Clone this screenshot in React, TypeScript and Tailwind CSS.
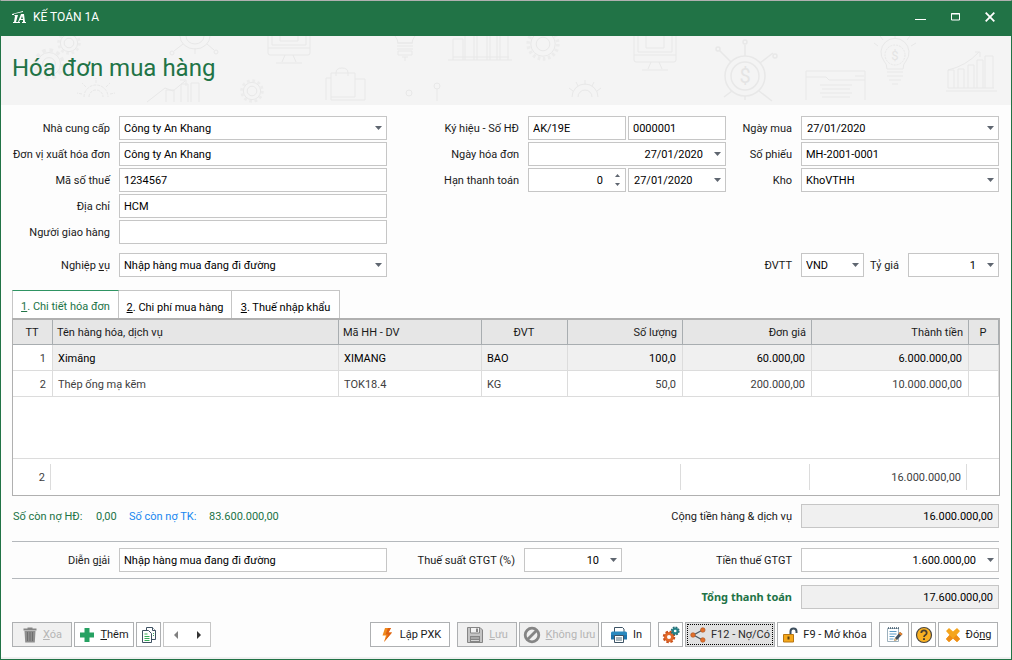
import type { ReactNode } from "react";
import clsx from "clsx";

const grid = "grid grid-cols-[98px_268fr_123px_198fr_57px_198fr] gap-x-[9px] gap-y-0.5";
const box = "h-6 w-full min-w-0 border border-[#c6c6c6] bg-white pl-1 text-black outline-none";

const Arrow = () => (
  <svg viewBox="0 0 7 4" className="h-1 w-[7px]" fill="#5f6670">
    <path d="M0 0h7L3.500 4z" />
  </svg>
);

const Label = ({ id, className, children }: { id: string; className?: string; children: ReactNode }) => (
  <label htmlFor={id} className={clsx("flex h-6 items-center justify-end pt-0.5 whitespace-nowrap", className)}>
    <span>{children}</span>
  </label>
);

type FieldProps = { id: string; value: string; right?: boolean; label?: string };

const TextField = ({ id, value, right, label }: FieldProps) => (
  <input id={id} aria-label={label} defaultValue={value} className={clsx(box, right ? "pr-[5px] text-right" : "pr-1")} />
);

const TotalField = ({ id, value }: FieldProps) => (
  <input id={id} readOnly value={value} className="h-6 w-full min-w-0 border border-[#c6c6c6] bg-[#f0f0f0] px-[5px] text-right text-black outline-none" />
);

// text box with a drop button (date picker, calculator)
const PickField = ({ id, value, right, label }: FieldProps) => (
  <div className="flex h-6 w-full min-w-0 border border-[#c6c6c6] bg-white">
    <input id={id} aria-label={label} defaultValue={value} className={clsx("w-full min-w-0 pt-0.5 pr-[7px] pl-[5px] text-black outline-none", right && "text-right")} />
    <button type="button" aria-label="Chọn" className="flex w-[15px] shrink-0 items-center justify-center">
      <Arrow />
    </button>
  </div>
);

const SelectField = ({ id, value, right }: FieldProps) => (
  <div className="relative w-full min-w-0">
    <select id={id} defaultValue={value} className={clsx(box, "appearance-none pt-0.5 pr-[22px]", right && "text-right")}>
      <option>{value}</option>
    </select>
    <span className="pointer-events-none absolute inset-y-0 right-0 flex w-[17px] items-center justify-center">
      <Arrow />
    </span>
  </div>
);

const SpinField = ({ id, value }: FieldProps) => (
  <div className="flex h-6 w-full min-w-0 border border-[#c6c6c6] bg-white">
    <input id={id} defaultValue={value} className="w-full min-w-0 pt-0.5 pr-[7px] text-right text-black outline-none" />
    <span className="flex w-[15px] shrink-0 flex-col items-center justify-center gap-1.5">
      <button type="button" aria-label="Tăng">
        <svg viewBox="0 0 5 3" className="block h-[3px] w-[5px]" fill="#5f6670"><path d="M0 3h5L2.500 0z" /></svg>
      </button>
      <button type="button" aria-label="Giảm">
        <svg viewBox="0 0 5 3" className="block h-[3px] w-[5px]" fill="#5f6670"><path d="M0 0h5L2.500 3z" /></svg>
      </button>
    </span>
  </div>
);

const Gear = ({ x, y, r, teeth = 12 }: { x: number; y: number; r: number; teeth?: number }) => (
  <g>
    <circle cx={x} cy={y} r={r * 0.72} />
    <circle cx={x} cy={y} r={r * 0.4} />
    <circle cx={x} cy={y} r={r * 0.87} stroke="#ececec" strokeWidth={r * 0.22} strokeDasharray={`${(r * 0.87 * Math.PI) / teeth}`} />
  </g>
);

const Monitor = ({ x, y }: { x: number; y: number }) => (
  <g>
    <path d={`M${x} ${y}v24q0 2 2 2h38q2 0 2-2v-24M${x} ${y + 19}h42M${x + 4} ${y}v16h34v-16M${x + 12} ${y}v12h18v-12`} />
    <path d={`M${x + 17} ${y + 26}l-3 7M${x + 25} ${y + 26}l3 7M${x + 8} ${y + 34}h26`} />
  </g>
);

const BannerArt = () => (
  <svg viewBox="1 36 1010 69" preserveAspectRatio="xMidYMid slice" className="absolute inset-0 h-full w-full" fill="none" stroke="#e8e8e8" aria-hidden="true">
    <Gear x={69} y={43} r={12} />
    <Gear x={49} y={64} r={16} />
    <path d="M84 97a12 12 0 0 1 24 0M89 97a7 7 0 0 1 14 0M96 83v-5M86 87l-4-4M106 87l4-4M82 94l-5-1M110 94l5-1" strokeDasharray="3 1" />
    <path d="M147 102l18-14 8 3 12-10M180 80h6v6M166 102V90h8v12M181 102V84h7v18M191 102V83h8v19" />
    <path d="M180 36a15 13 0 0 0 30 0M186 36a9 8 0 0 0 18 0M183 44l-9 7M207 44l7 6M195 48v6" />
    <circle cx="172" cy="53" r="2" /><circle cx="216" cy="52" r="2" />
    <Gear x={252} y={91} r={12} />
    <Monitor x={268} y={29} />
    <path d="M326 100V78h5M331 97V73h24v24zM336 76v-3q0-5 6-5t6 5v3M355 79h10v21h-34v-3" />
    <path d="M395 36q3 4 3 7h14q0-3 3-7M397 43h16M397 46h16M397 49h16M398 51h14v4h-14zM402 57h6M405 57v4" />
    <path d="M448 60h64M453 60V39h10v21M465 60V36M474 60V36M477 60V36M487 60V36M490 60V36M497 60V36M500 60V36M508 60V36M453 57h56" />
    <Gear x={543} y={44} r={17} teeth={18} />
    <circle cx="409" cy="93" r="3" /><circle cx="437" cy="86" r="3" /><path d="M437 89v12" />
    <path d="M572 97a13 13 0 0 1 26 0M578 97a7 7 0 0 1 14 0M585 80v5M576 82l2 4M594 82l-2 4M569 88l4 3M601 88l-4 3" />
    <Monitor x={634} y={36} />
    <g strokeWidth="1.500">
      <circle cx="745" cy="76" r="20" /><circle cx="745" cy="76" r="14" />
      <path d="M745 56V45M731 62l-12-12M760 63l13-10M732 91l-8 6M759 91l13 10M745 96v4" />
      <circle cx="718" cy="49" r="2" /><circle cx="745" cy="42" r="2" /><circle cx="775" cy="56" r="2" />
    </g>
    <text x="745" y="83" textAnchor="middle" fontSize="20" fill="#e4e4e4" stroke="none">$</text>
    <path d="M806 100V71h59v29M806 77h20l3 3h36M855 76h9M820 85h32M822 89h28M820 93h32M822 97h28" />
    <path d="M887 69q0-5-3-8a14 14 0 1 1 22 0q-3 3-3 8zM887 72h16M887 76h16M889 80h12M892 84h6" />
    <circle cx="895" cy="55" r="10" strokeDasharray="2 1" />
    <path d="M895 38v-3M883 40l-3-4M907 40l3-4M878 46l-4-3M911 46l5-3" />
    <text x="895" y="60" textAnchor="middle" fontSize="13" fill="#e4e4e4" stroke="none">$</text>
    <path d="M946 91h51M948 88V70h6v18M958 88V69h6v19M968 88V65h6v23M977 88V60h6v28M985 88V56h8v32M948 70q18-4 31-18M975 52h5v5M948 88h46" />
  </svg>
);

const TitleBar = () => (
  <header className="flex h-[35px] items-center justify-between bg-[#217346] pr-4 pb-[3px] pl-[11px] text-white">
    <div className="flex items-center gap-[7px]">
      <svg viewBox="0 0 14 13" className="h-[13px] w-3.5" fill="#fff" aria-hidden="true">
        <path d="M0 3L11 0v1L2 3v1H0zM3 4h3L4 11h1v1H1v-1h1l1-6H2zM9 3h3l1 8h1v1h-4v-1h1V9H8l-1 2h1v1H5v-1h1zM9 8h2l-1-3z" />
      </svg>
      <span className="text-xs">KẾ TOÁN 1A</span>
    </div>
    <div className="flex items-center gap-[25px]">
      <button type="button" aria-label="Thu nhỏ">
        <svg viewBox="0 0 11 10" className="h-2.5 w-[11px]" fill="#fff"><path d="M0 7h11v1H0z" /></svg>
      </button>
      <button type="button" aria-label="Phóng to">
        <svg viewBox="0 0 9 8" className="h-2 w-[9px]" fill="none" stroke="#fff"><path d="M.5.5h8v6.500h-8zM0 1h9" /></svg>
      </button>
      <button type="button" aria-label="Đóng cửa sổ">
        <svg viewBox="0 0 10 10" className="h-2.5 w-2.5" fill="none" stroke="#fff" strokeWidth="1.800"><path d="M.7.7l8.600 8.600M9.300.7L.7 9.300" /></svg>
      </button>
    </div>
  </header>
);

const tabs = [
  { n: "1", text: "Chi tiết hóa đơn", width: "w-[107px]" },
  { n: "2", text: "Chi phí mua hàng", width: "w-[113px]" },
  { n: "3", text: "Thuế nhập khẩu", width: "w-[108px]" },
];

const rows = [
  ["1", "Ximăng", "XIMANG", "BAO", "100,0", "60.000,00", "6.000.000,00", ""],
  ["2", "Thép ống mạ kẽm", "TOK18.4", "KG", "50,0", "200.000,00", "10.000.000,00", ""],
];

const heads = [
  { text: "TT", align: "text-center" },
  { text: "Tên hàng hóa, dịch vụ", align: "text-left" },
  { text: "Mã HH - DV", align: "text-left" },
  { text: "ĐVT", align: "text-center" },
  { text: "Số lượng", align: "text-right" },
  { text: "Đơn giá", align: "text-right" },
  { text: "Thành tiền", align: "text-right" },
  { text: "P", align: "text-center" },
];

const ItemTable = () => (
  <div className="border border-t-2 border-[#b0b0b0] bg-white">
    <table className="w-full table-fixed border-separate border-spacing-0">
      <colgroup>
        <col className="w-10" />
        <col />
        <col className="w-[143px]" />
        <col className="w-[86px]" />
        <col className="w-[115px]" />
        <col className="w-[129px]" />
        <col className="w-[157px]" />
        <col className="w-[30px]" />
      </colgroup>
      <thead>
        <tr className="h-[25px] bg-[#e6e6e6]">
          {heads.map((h) => (
            <th key={h.text} className={clsx("border-r border-b border-[#a8adb0] pt-0.5 pr-[5px] pl-1 font-normal text-[#1a1a1a]", h.align)}>{h.text}</th>
          ))}
        </tr>
      </thead>
      <tbody>
        {rows.map((row, i) => (
          <tr key={row[0]} className={clsx("h-[26px]", i === 0 ? "text-black" : "text-[#404040]")}>
            {row.map((cell, c) => (
              <td
                key={c}
                className={clsx(
                  "border-r border-b border-[#dcdcdc] px-[5px] pt-0.5",
                  (c === 0 || c > 3) && "pr-1.5 text-right",
                  c === 0 && "text-[#404040]",
                  i === 0 && c > 0 && "bg-[#f0f0f0]"
                )}
              >
                {cell}
              </td>
            ))}
          </tr>
        ))}
        <tr className="h-[62px]">
          <td colSpan={8} className="border-b border-[#dcdcdc]" />
        </tr>
      </tbody>
      <tfoot>
        <tr className="h-9 text-[#404040]">
          <td className="pr-0.5"><div className="h-[26px] border-r border-[#dcdcdc] pr-[5px] text-right leading-7">2</div></td>
          <td colSpan={4} className="pr-0.5"><div className="h-[26px] border-r border-[#dcdcdc]" /></td>
          <td className="pr-0.5"><div className="h-[26px] border-r border-[#dcdcdc]" /></td>
          <td className="pr-0.5"><div className="h-[26px] border-r border-[#dcdcdc] pr-[5px] text-right leading-7">16.000.000,00</div></td>
          <td />
        </tr>
      </tfoot>
    </table>
  </div>
);

const TrashIcon = () => (
  <svg viewBox="0 0 16 16" className="h-4 w-4 shrink-0">
    <path d="M1.500 1.500h4V.5h5v1h4v2h-13z" fill="#858585" />
    <path d="M2.500 4h11l-.7 11.500h-9.600z" fill="#8e8e8e" />
    <path d="M5.500 5v9M8 5v9M10.500 5v9" stroke="#6e6e6e" />
  </svg>
);

const PlusIcon = () => (
  <svg viewBox="0 0 16 16" className="h-4 w-4 shrink-0">
    <path d="M5.500 1h5v4.500H15v5h-4.500V15h-5v-4.500H1v-5h4.500z" fill="#26a162" />
  </svg>
);

const CopyIcon = () => (
  <svg viewBox="0 0 16 16" className="h-4 w-4 shrink-0" fill="#fff" stroke="#3f5263">
    <path d="M5.500.5h6l3 3v9h-9z" />
    <path d="M11.500.5v3h3" />
    <path d="M1.500 3.500h6l3 3v9h-9z" />
    <path d="M3.500 7h3M3.500 9.500h5M3.500 11.500h5M3.500 13.500h5M12 6.500h1M12 8.500h1" stroke="#37ad59" />
  </svg>
);

const BoltIcon = () => (
  <svg viewBox="0 0 16 16" className="h-4 w-4 shrink-0">
    <path d="M6 1h6L9.500 5.500H13L5 15l2-6.500H3.500z" fill="#f08a1d" />
    <path d="M12 1L9.500 5.500H13L5 15l4-7.500H6.500L9 1z" fill="#dd5f12" />
  </svg>
);

const SaveIcon = () => (
  <svg viewBox="0 0 18 18" className="h-[18px] w-[18px] shrink-0">
    <path d="M1.500 1.500h12.500l2.500 2.500v12.500h-15z" fill="#c4c4c4" stroke="#858585" />
    <path d="M4.500 1.500h9v5.500h-9z" fill="#f3f3f3" stroke="#858585" />
    <path d="M10 2.500h2v3.500h-2z" fill="#858585" />
    <path d="M4 10h10v6.500H4z" fill="#858585" />
    <path d="M5 11h8v2H5z" fill="#a8a8a8" />
    <path d="M5 14.500h8" stroke="#d6d6d6" />
  </svg>
);

const BanIcon = () => (
  <svg viewBox="0 0 18 18" className="h-[18px] w-[18px] shrink-0" fill="none" stroke="#858585" strokeWidth="2.800">
    <circle cx="9" cy="9" r="6.800" />
    <path d="M13.500 4.500l-9 9" />
  </svg>
);

const PrintIcon = () => (
  <svg viewBox="0 0 18 18" className="h-[18px] w-[18px] shrink-0">
    <path d="M4.500 1.500h8l1.500 1.500v4h-9.500z" fill="#fff" stroke="#3d5365" />
    <path d="M2.500 5.500h13q1.500 0 1.500 1.500v6h-2.500v-3h-11v3H1V7q0-1.500 1.500-1.500z" fill="#2989bf" />
    <path d="M1 9h16v4.500H1z" fill="#1d75ad" />
    <path d="M4.500 9.500h9v7h-9z" fill="#fff" stroke="#3d5365" />
    <path d="M6 12h6M6 14h6" stroke="#51707f" />
  </svg>
);

const GearsIcon = () => (
  <svg viewBox="0 0 18 18" className="h-[18px] w-[18px] shrink-0" fill="none">
    <circle cx="7" cy="11" r="3.500" stroke="#e2692a" strokeWidth="3" />
    <circle cx="7" cy="11" r="5.300" stroke="#c9521c" strokeWidth="1.900" strokeDasharray="2.500 1.660" />
    <circle cx="13.200" cy="5" r="2.400" stroke="#26858a" strokeWidth="2.200" />
    <circle cx="13.200" cy="5" r="3.700" stroke="#2a6e78" strokeWidth="1.500" strokeDasharray="1.800 1.100" />
  </svg>
);

const ShareIcon = () => (
  <svg viewBox="0 0 16 16" className="h-4 w-4 shrink-0">
    <path d="M12.500 3L3.500 8l9 5" fill="none" stroke="#4b5a66" strokeWidth="1.300" />
    <g fill="#e2702c" stroke="#a9501f" strokeWidth=".6">
      <circle cx="12.800" cy="3" r="2.300" /><circle cx="3" cy="8" r="2.300" /><circle cx="12.800" cy="13" r="2.300" />
    </g>
  </svg>
);

const UnlockIcon = () => (
  <svg viewBox="0 0 16 16" className="h-4 w-4 shrink-0">
    <path d="M8.500 7V4.500a3 3 0 0 1 6 0V6" fill="none" stroke="#3d4f5e" strokeWidth="2" />
    <path d="M1.500 7.500h10v7.500h-10z" fill="#f5a81c" stroke="#b87612" />
    <path d="M6.500 9.500v3" stroke="#5d4312" strokeWidth="2" />
  </svg>
);

const NoteIcon = () => (
  <svg viewBox="0 0 18 18" className="h-[18px] w-[18px] shrink-0">
    <path d="M2.500 2.500h11v13h-11z" fill="#fff" stroke="#9db1bd" />
    <path d="M3 2h11" stroke="#3d5365" strokeWidth="1.500" strokeDasharray="1 1" />
    <path d="M4.500 5.500h7M4.500 8h7M4.500 10.500h5M4.500 13h4" stroke="#5d9cc5" />
    <path d="M9 15l1-3 5-6 2.500 2-5.500 6z" fill="#46535e" />
    <path d="M15 6l2.500 2-1.500 1.500L13.500 7.500z" fill="#e8852d" />
    <path d="M9 15l1-3 2 2z" fill="#f3c27b" />
  </svg>
);

const HelpIcon = () => (
  <svg viewBox="0 0 18 18" className="h-[18px] w-[18px] shrink-0">
    <circle cx="9" cy="9" r="7.500" fill="#f9b122" stroke="#4a4642" strokeWidth="1.200" />
    <path d="M6.300 7q0-2.700 2.700-2.700T11.700 7q0 1.300-1.300 2T9 11" fill="none" stroke="#4a4030" strokeWidth="1.800" />
    <path d="M8 12.200h2V14H8z" fill="#4a4030" />
  </svg>
);

const CloseIcon = () => (
  <svg viewBox="0 0 16 16" className="h-4 w-4 shrink-0">
    <path d="M4 1l4 3.500L12 1l3 3-3.500 4L15 12l-3 3-4-3.500L4 15l-3-3 3.500-4L1 4z" fill="#f5a51d" />
    <path d="M1 12l3.500-4L8 11.500 4 15zM11.500 8L15 12l-3 3-4-3.500z" fill="#ee8d16" />
  </svg>
);

const ToolButton = ({ width, icon, disabled, focused, label, children }: { width: string; icon: ReactNode; disabled?: boolean; focused?: boolean; label?: string; children?: ReactNode }) => (
  <button
    type="button"
    disabled={disabled}
    aria-label={label}
    className={clsx(
      "flex h-[25px] items-center justify-center border border-[#aeb0b2] p-px whitespace-nowrap",
      width,
      disabled ? "bg-[#f0f0f0] text-[#b5b5b5]" : focused ? "bg-[#e1e1e1] text-[#2b2b2b]" : "bg-white text-[#1a1a1a]"
    )}
  >
    <span className={clsx("flex h-full w-full items-center justify-center gap-[5px] border", focused ? "border-dotted border-black" : "border-transparent")}>
      {icon}
      {children && <span>{children}</span>}
    </span>
  </button>
);

export default function App() {
  return (
    <div className="flex min-h-screen flex-col border border-t-[#b0b0b0] border-x-[#217346] border-b-[#217346] bg-[#fdfdfd] font-['Roboto','Noto_Sans',sans-serif] text-[11px] leading-4 text-[#1a1a1a]">
      <TitleBar />
      <div className="relative h-[69px] bg-[#f4f4f4]">
        <BannerArt />
        <h1 className="relative px-[11px] pt-3 text-2xl leading-[40px] text-[#217346]">Hóa đơn mua hàng</h1>
      </div>

      <main className="flex flex-col pr-3 pl-[11px] pt-[11px]">
        <div className={grid}>
          <Label id="supplier">Nhà cung cấp</Label>
          <SelectField id="supplier" value="Công ty An Khang" />
          <Label id="serial">Ký hiệu - Số HĐ</Label>
          <div className="flex gap-0.5">
            <TextField id="serial" value="AK/19E" />
            <TextField id="number" label="Số hóa đơn" value="0000001" />
          </div>
          <Label id="buy-date">Ngày mua</Label>
          <PickField id="buy-date" value="27/01/2020" />

          <Label id="issuer">Đơn vị xuất hóa đơn</Label>
          <TextField id="issuer" value="Công ty An Khang" />
          <Label id="invoice-date">Ngày hóa đơn</Label>
          <PickField id="invoice-date" value="27/01/2020" right />
          <Label id="voucher">Số phiếu</Label>
          <TextField id="voucher" value="MH-2001-0001" />

          <Label id="tax-code">Mã số thuế</Label>
          <TextField id="tax-code" value="1234567" />
          <Label id="due-days">Hạn thanh toán</Label>
          <div className="flex gap-0.5">
            <SpinField id="due-days" value="0" />
            <PickField id="due-date" label="Ngày hạn thanh toán" value="27/01/2020" />
          </div>
          <Label id="store">Kho</Label>
          <SelectField id="store" value="KhoVTHH" />

          <Label id="address">Địa chỉ</Label>
          <TextField id="address" value="HCM" />
          <Label id="deliverer" className="col-start-1">Người giao hàng</Label>
          <TextField id="deliverer" value="" />
        </div>

        <div className={clsx(grid, "mt-[9px]")}>
          <Label id="operation">Nghiệp <u>v</u>ụ</Label>
          <SelectField id="operation" value="Nhập hàng mua đang đi đường" />
          <Label id="currency" className="col-start-5">ĐVTT</Label>
          <div className="flex">
            <div className="w-[63px] shrink-0"><SelectField id="currency" value="VND" /></div>
            <Label id="rate" className="w-[35px] shrink-0">Tỷ giá</Label>
            <div className="ml-[9px] min-w-0 flex-1"><PickField id="rate" value="1" right /></div>
          </div>
        </div>

        <section className="mt-[13px] -mr-px">
          <div role="tablist" className="flex">
            {tabs.map((tab, i) => (
              <button
                key={tab.n}
                type="button"
                role="tab"
                aria-selected={i === 0}
                className={clsx(
                  "h-7 border-r border-[#c6c6c6] bg-white text-center whitespace-nowrap",
                  tab.width,
                  i === 0 ? "border-t border-l border-t-[#2f9463] pt-1 text-[#217346]" : "border-t pt-1.5 text-black"
                )}
              >
                <u>{tab.n}</u>. {tab.text}
              </button>
            ))}
          </div>
          <ItemTable />
        </section>

        <div className={clsx(grid, "mt-2")}>
          <div className="col-span-3 flex items-center pt-0.5 pl-px text-[#217346]">
            <span className="w-[83px]">Số còn nợ HĐ:</span>
            <span className="w-[33px]">0,00</span>
            <span className="w-20 text-[#1686f0]">Số còn nợ TK:</span>
            <span>83.600.000,00</span>
          </div>
          <Label id="subtotal" className="col-span-2">Cộng tiền hàng &amp; dịch vụ</Label>
          <TotalField id="subtotal" value="16.000.000,00" />
        </div>

        <div className={clsx(grid, "mt-[13px] border-y border-[#b4b8bc] py-1.5")}>
          <Label id="note">Diễn g<u>i</u>ải</Label>
          <TextField id="note" value="Nhập hàng mua đang đi đường" />
          <div className="col-span-3 flex gap-[9px]">
            <Label id="vat-rate" className="w-[119px]">Thuế suất GTGT (%)</Label>
            <div className="w-[98px]"><SelectField id="vat-rate" value="10" right /></div>
            <Label id="vat" className="ml-auto">Tiền thuế GTGT</Label>
          </div>
          <PickField id="vat" value="1.600.000,00" right />
        </div>

        <div className={clsx(grid, "mt-1.5")}>
          <label htmlFor="total" className="col-span-2 col-start-4 text-right font-['Noto_Sans',sans-serif] leading-6 font-bold text-[#217346]">Tổng thanh toán</label>
          <TotalField id="total" value="17.600.000,00" />
        </div>

        <div className="mt-[13px] flex justify-between">
          <div className="flex gap-0.5">
            <ToolButton width="w-[60px]" icon={<TrashIcon />} disabled><u>X</u>óa</ToolButton>
            <ToolButton width="w-[60px]" icon={<PlusIcon />}><u>T</u>hêm</ToolButton>
            <ToolButton width="w-[25px]" icon={<CopyIcon />} label="Sao chép" />
            <div className="flex h-[25px] w-12 border border-[#c6c6c6] bg-white">
              <button type="button" aria-label="Trước" className="flex flex-1 items-center justify-center">
                <svg viewBox="0 0 4 8" className="h-2 w-1" fill="#808080"><path d="M4 0v8L0 4z" /></svg>
              </button>
              <button type="button" aria-label="Sau" className="flex flex-1 items-center justify-center">
                <svg viewBox="0 0 4 8" className="h-2 w-1" fill="#333"><path d="M0 0v8l4-4z" /></svg>
              </button>
            </div>
          </div>
          <div className="flex gap-[7px] pr-px">
            <ToolButton width="w-20" icon={<BoltIcon />}>Lập PXK</ToolButton>
            <div className="flex gap-0.5">
              <ToolButton width="w-[60px]" icon={<SaveIcon />} disabled><u>L</u>ưu</ToolButton>
              <ToolButton width="w-20" icon={<BanIcon />} disabled><u>K</u>hông lưu</ToolButton>
              <ToolButton width="w-[50px]" icon={<PrintIcon />}>In</ToolButton>
            </div>
            <div className="flex gap-0.5">
              <ToolButton width="w-[25px]" icon={<GearsIcon />} label="Tùy chọn" />
              <ToolButton width="w-[90px]" icon={<ShareIcon />} focused>F12 - Nợ/Có</ToolButton>
              <ToolButton width="w-[95px]" icon={<UnlockIcon />}>F9 - Mở khóa</ToolButton>
            </div>
            <div className="flex gap-0.5">
              <ToolButton width="w-[30px]" icon={<NoteIcon />} label="Ghi chú" />
              <ToolButton width="w-[25px]" icon={<HelpIcon />} label="Trợ giúp" />
              <ToolButton width="w-[60px]" icon={<CloseIcon />}>Đó<u>n</u>g</ToolButton>
            </div>
          </div>
        </div>
      </main>
      <div className="mt-auto h-0.5 bg-[#f0f0f0]" />
    </div>
  );
}
